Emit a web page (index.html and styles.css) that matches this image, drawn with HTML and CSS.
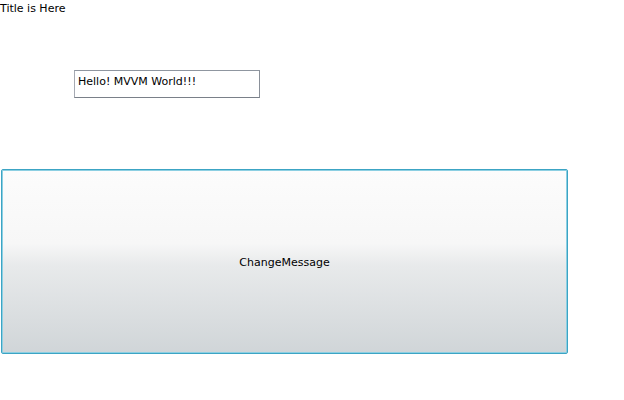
FILE: index.html
```html
<!DOCTYPE html>
<html>
<head>
<meta charset="utf-8">
<link rel="stylesheet" href="styles.css">
</head>
<body>
<div class="title">Title is Here</div>
<div class="row">
  <input class="textbox" type="text" value="Hello! MVVM World!!!">
</div>
<button class="btn">ChangeMessage</button>
</body>
</html>
```
FILE: styles.css
```css
html, body {
  margin: 0;
  padding: 0;
  background: #ffffff;
}
body {
  font-family: "DejaVu Sans", Verdana, sans-serif;
  font-size: 11px;
  color: #000;
  width: 624px;
  height: 400px;
}
.title {
  height: 14px;
  line-height: 14px;
  padding-top: 2px;
  font-size: 11px;
}
.row {
  padding: 54px 0 0 74px;
  height: 28px;
}
.textbox {
  -webkit-appearance: none;
  appearance: none;
  box-sizing: border-box;
  width: 186px;
  height: 28px;
  margin: 0;
  padding: 0 0 6px 3px;
  border: 1px solid #abadb3;
  border-top-color: #8f96a0;
  border-left-color: #a6aab3;
  border-bottom-color: #7a8089;
  border-right-color: #8a9099;
  border-radius: 0;
  font-family: "DejaVu Sans", Verdana, sans-serif;
  font-size: 11px;
  line-height: 20px;
  color: #000;
  outline: none;
  background: #fff;
}
.btn {
  -webkit-appearance: none;
  appearance: none;
  display: block;
  box-sizing: border-box;
  margin: 71px 0 0 1px;
  width: 567px;
  height: 185px;
  border: 1px solid #3ca4c4;
  border-radius: 2px;
  box-shadow: inset 0 0 0 1px #8ccfe2;
  background: linear-gradient(to bottom, #fcfcfc 0%, #f7f7f7 40%, #e8eaeb 52%, #d0d5d8 100%);
  font-family: "DejaVu Sans", Verdana, sans-serif;
  font-size: 11px;
  color: #000;
  padding: 2px 0 0 0;
}
```
